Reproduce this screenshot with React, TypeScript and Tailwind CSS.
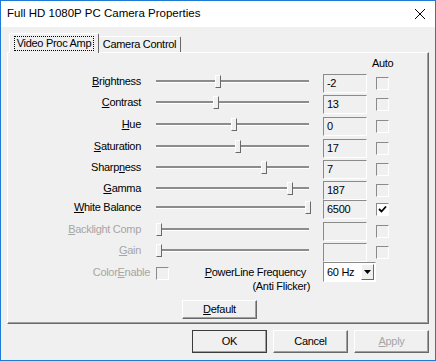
import React from 'react';

const font = { fontFamily: '"Liberation Sans", Arial, sans-serif' };

type Row = { label: string; key: number; value: string; pos: number; h: string; disabled?: boolean; checked?: boolean };

const rows: Row[] = [
  { label: 'Brightness', key: 0, value: '-2', pos: 62, h: 'h-[21px]' },
  { label: 'Contrast', key: 0, value: '13', pos: 60, h: 'h-[22px]' },
  { label: 'Hue', key: 0, value: '0', pos: 78, h: 'h-[22px]' },
  { label: 'Saturation', key: 0, value: '17', pos: 82, h: 'h-[21px]' },
  { label: 'Sharpness', key: 5, value: '7', pos: 108, h: 'h-[21px]' },
  { label: 'Gamma', key: 0, value: '187', pos: 134, h: 'h-[19px]' },
  { label: 'White Balance', key: 0, value: '6500', pos: 152, h: 'h-[22px]', checked: true },
  { label: 'Backlight Comp', key: 0, value: '', pos: 3, h: 'h-[21px]', disabled: true },
  { label: 'Gain', key: 0, value: '', pos: 3, h: 'h-[19px]', disabled: true },
];

const Mn = ({ text, idx }: { text: string; idx: number }) => (
  <>
    {text.slice(0, idx)}
    <u className="underline underline-offset-[1px]">{text[idx]}</u>
    {text.slice(idx + 1)}
  </>
);

const CheckBox = ({ checked }: { checked?: boolean }) => (
  <div
    className={`w-[13px] h-[13px] border border-t-[#8a8a8a] border-l-[#8a8a8a] border-b-white border-r-white flex items-center justify-center ${
      checked ? 'bg-white' : 'bg-[#f0f0f0]'
    }`}
  >
    {checked && (
      <svg width="9" height="9" viewBox="0 0 9 9">
        <path d="M1 4 L3.5 6.5 L8 1.5" fill="none" stroke="#000" strokeWidth="1.8" />
      </svg>
    )}
  </div>
);

const Slider = ({ pos }: { pos: number }) => (
  <div className="relative w-[153px] h-[13px] mt-[1px]">
    <div className="absolute left-0 right-0 top-[5px] h-[3px] border-t-2 border-t-[#8c8c8c] border-b border-b-white" />
    <div
      className="absolute top-0 w-[6px] h-[13px] bg-[#f0f0f0] border-l border-t border-l-white border-t-white border-r border-b border-r-[#696969] border-b-[#696969]"
      style={{ left: pos - 3 }}
    />
  </div>
);

const Button = ({ children, def, disabled }: { children: React.ReactNode; def?: boolean; disabled?: boolean }) => (
  <div
    className={`w-[75px] h-[23px] flex items-center justify-center bg-[#f0f0f0] border ${
      def ? 'border-[#3c3c3c]' : 'border-t-white border-l-white border-b-[#696969] border-r-[#696969]'
    } shadow-[inset_-1px_-1px_0_#a0a0a0] text-[11px] tracking-[-0.3px] ${disabled ? 'text-[#a6a6a6]' : 'text-black'}`}
  >
    {children}
  </div>
);

export default function App() {
  return (
    <div
      className="w-[436px] h-[361px] border border-[#1f7ad6] bg-[#f0f0f0] flex flex-col overflow-hidden"
      style={font}
    >
      <div className="h-[26px] bg-white flex items-center justify-between pl-[6px] pr-[10px]">
        <span className="text-[11.5px] text-black">Full HD 1080P PC Camera Properties</span>
        <svg width="10" height="10" viewBox="0 0 10 10">
          <path d="M0 0 L10 10 M10 0 L0 10" stroke="#000" strokeWidth="1" />
        </svg>
      </div>

      <div className="flex-1 px-[6px] pt-[6px] text-[11px] tracking-[-0.3px] text-black">
        <div className="h-[19px] flex items-end pl-[2px]">
          <div className="relative z-10 h-[20px] mb-[-1px] w-[90px] bg-[#f0f0f0] border-l border-t border-l-white border-t-white border-r border-r-[#696969] rounded-t-[2px] flex items-start justify-center pt-[2px]">
            <span className="border border-dotted border-black px-[2px] leading-[13px] h-[15px]">Video Proc Amp</span>
          </div>
          <div className="h-[16px] w-[82px] border-t border-t-white border-r border-r-[#696969] rounded-t-[2px] flex items-start justify-center pt-[1px] leading-[13px]">
            Camera Control
          </div>
        </div>

        <div className="h-[272px] border border-t-white border-l-white border-b-[#696969] border-r-[#696969] shadow-[inset_-1px_-1px_0_#a0a0a0] flex flex-col">
          <div className="h-[21px] pt-[4px] pl-[364px] leading-[13px]">Auto</div>

          {rows.map((r) => (
            <div key={r.label} className={`${r.h} flex items-start`}>
              <div
                className={`w-[133px] text-right leading-[13px] mt-[1px] ${r.disabled ? 'text-[#a6a6a6]' : ''}`}
              >
                <Mn text={r.label} idx={r.key} />
              </div>
              <div className="ml-[15px]">
                <Slider pos={r.pos} />
              </div>
              <div className="ml-[14px] w-[44px] h-[19px] border border-t-[#8a8a8a] border-l-[#8a8a8a] border-b-white border-r-white bg-[#f0f0f0] leading-[17px] pl-[3px]">
                {r.value}
              </div>
              <div className="ml-[9px] mt-[3px]">
                <CheckBox checked={r.checked} />
              </div>
            </div>
          ))}

          <div className="h-[38px] flex items-start">
            <div className="w-[142px] text-right mt-[3px] leading-[14px] text-[#a6a6a6]">
              Color<Mn text="Enable" idx={0} />
            </div>
            <div className="ml-[6px] mt-[5px]">
              <CheckBox />
            </div>
            <div className="ml-[21px] w-[120px] text-right mt-[3px] leading-[14px]">
              <div className="pr-[4px]">
                <Mn text="PowerLine Frequency" idx={0} />
              </div>
              <div>(Anti Flicker)</div>
            </div>
            <div className="ml-[13px] w-[53px] h-[20px] bg-white border border-t-[#8a8a8a] border-l-[#8a8a8a] border-b-white border-r-white flex items-center">
              <span className="flex-1 pl-[3px] leading-[14px]">60 Hz</span>
              <div className="w-[13px] h-[16px] mr-[1px] bg-[#f0f0f0] border border-t-white border-l-white border-b-[#696969] border-r-[#696969] flex items-center justify-center">
                <svg width="7" height="4" viewBox="0 0 7 4">
                  <path d="M0 0 H7 L3.5 4 Z" fill="#000" />
                </svg>
              </div>
            </div>
          </div>

          <div className="pl-[174px]">
            <div className="w-[75px] h-[19px] flex items-center justify-center bg-[#f0f0f0] border border-t-white border-l-white border-b-[#696969] border-r-[#696969] shadow-[inset_-1px_-1px_0_#a0a0a0]">
              <Mn text="Default" idx={0} />
            </div>
          </div>
        </div>

        <div className="mt-[6px] flex justify-end gap-[6px]">
          <Button def>OK</Button>
          <Button>Cancel</Button>
          <Button disabled>
            <Mn text="Apply" idx={0} />
          </Button>
        </div>
      </div>
    </div>
  );
}
